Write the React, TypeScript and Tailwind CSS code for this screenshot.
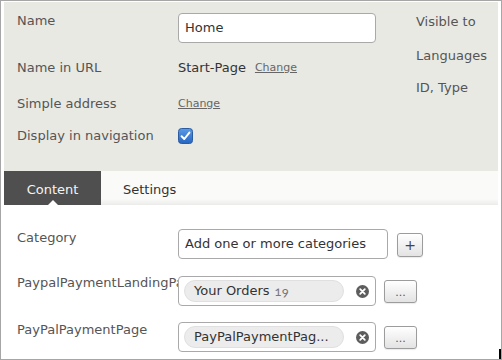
import React from 'react'

const Btn: React.FC<{ w: string; children: React.ReactNode }> = ({ w, children }) => {
    return (
        <div className={`${w} flex items-center justify-center rounded-[3px] border border-[#9c9c9c] bg-gradient-to-b from-white to-[#e3e3e3] text-[#444] shadow-[0_1px_1px_rgba(0,0,0,0.08)]`}>
            {children}
        </div>
    )
}

const ClearIcon = () => (
    <svg width="13" height="13" viewBox="0 0 13 13">
        <circle cx="6.5" cy="6.5" r="6.5" fill="#5d5d5d" />
        <path d="M4.2 4.2 L8.8 8.8 M8.8 4.2 L4.2 8.8" stroke="#fff" strokeWidth="1.8" strokeLinecap="round" />
    </svg>
)

const Chip: React.FC<{ children: React.ReactNode }> = ({ children }) => {
    return (
        <div className="flex h-[22px] w-[160px] items-center rounded-full border border-[#e0e0e0] bg-[#ececec] pl-[9px] text-[#333] whitespace-nowrap">
            {children}
        </div>
    )
}

const App: React.FC = () => {
    return (
        <div className="relative h-[360px] w-[502px] overflow-hidden border border-[#a6a6a6] bg-white px-[3px] pt-px font-['DejaVu_Sans',Verdana,sans-serif] text-[13px] leading-4 text-[#555]">
            {/* header panel */}
            <div className="flex h-[169px] bg-[#e9e9e4] pl-[13px]">
                <div className="w-[399px] pt-[11px]">
                    <div className="flex items-start">
                        <div className="w-[161px]">Name</div>
                        <div className="flex h-[30px] w-[198px] items-center rounded-[4px] border border-[#a9a9a9] bg-white px-[6px] text-[#333]">
                            Home
                        </div>
                    </div>
                    <div className="mt-[17px] flex items-center">
                        <div className="w-[161px]">Name in URL</div>
                        <div className="flex items-center gap-[9px]">
                            <span className="text-[#333]">Start-Page</span>
                            <span className="text-[11px] text-[#666] underline">Change</span>
                        </div>
                    </div>
                    <div className="mt-[20px] flex items-center">
                        <div className="w-[161px]">Simple address</div>
                        <span className="text-[11px] text-[#666] underline">Change</span>
                    </div>
                    <div className="mt-4 flex items-center">
                        <div className="w-[161px]">Display in navigation</div>
                        <svg width="15" height="16" viewBox="0 0 15 16">
                            <defs>
                                <linearGradient id="cb" x1="0" y1="0" x2="0" y2="1">
                                    <stop offset="0" stopColor="#5b9be6" />
                                    <stop offset="1" stopColor="#2566c2" />
                                </linearGradient>
                            </defs>
                            <rect x="0.5" y="0.5" width="14" height="15" rx="3" fill="url(#cb)" stroke="#2a5c9f" />
                            <path d="M3.6 8.2 L6.3 11 L11.4 4.6" stroke="#fff" strokeWidth="2" fill="none" strokeLinecap="round" strokeLinejoin="round" />
                        </svg>
                    </div>
                </div>
                <div className="pt-3">
                    <div>Visible to</div>
                    <div className="mt-[18px]">Languages</div>
                    <div className="mt-4">ID, Type</div>
                </div>
            </div>

            {/* tabs */}
            <div className="flex h-[34px] bg-[linear-gradient(to_bottom,#fafaf9_0%,#fafaf9_82%,#ebebe9_100%)]">
                <div className="relative flex w-[97px] items-center justify-center bg-[#4f4f4f] pt-1 text-[#f4f4f4]">
                    Content
                    <span className="absolute bottom-0 left-1/2 -translate-x-1/2 border-x-[5px] border-b-[5px] border-x-transparent border-b-white" />
                </div>
                <div className="flex items-center pl-[22px] pt-1 text-[#333]">Settings</div>
            </div>

            {/* content */}
            <div className="flex flex-col pl-[13px] pt-[24px]">
                <div className="flex items-start">
                    <div className="w-[161px] pt-px">Category</div>
                    <div className="flex h-[30px] w-[210px] items-center rounded-[4px] border border-[#a9a9a9] bg-white px-[6px] text-[#333]">
                        Add one or more categories
                    </div>
                    <div className="ml-[9px] mt-[4px] flex h-[24px]">
                        <Btn w="w-[26px]"><span className="text-[14px]">+</span></Btn>
                    </div>
                </div>
                <div className="mt-[17px] flex items-start">
                    <div className="-mt-px w-[161px] overflow-hidden whitespace-nowrap">PaypalPaymentLandingPage</div>
                    <div className="flex h-[30px] w-[198px] items-center justify-between rounded-[4px] border border-[#a9a9a9] bg-white pl-[5px] pr-[6px]">
                        <Chip>
                            Your Orders
                            <span className="ml-[5px] font-['Lato',sans-serif] text-[13px] text-[#777] oldstyle-nums">19</span>
                        </Chip>
                        <ClearIcon />
                    </div>
                    <div className="ml-[8px] mt-[4px] flex h-[23px]">
                        <Btn w="w-[33px]"><span className="pt-[3px] text-[11px] text-[#555]">...</span></Btn>
                    </div>
                </div>
                <div className="mt-[16px] flex items-start">
                    <div className="w-[161px] overflow-hidden whitespace-nowrap">PayPalPaymentPage</div>
                    <div className="flex h-[30px] w-[198px] items-center justify-between rounded-[4px] border border-[#a9a9a9] bg-white pl-[5px] pr-[6px]">
                        <Chip>PayPalPaymentPag...</Chip>
                        <ClearIcon />
                    </div>
                    <div className="ml-[8px] mt-[4px] flex h-[23px]">
                        <Btn w="w-[33px]"><span className="pt-[3px] text-[11px] text-[#555]">...</span></Btn>
                    </div>
                </div>
            </div>

            <div className="absolute bottom-0 right-0 h-[10px] w-[2px] bg-black" />
        </div>
    )
}

export default App
